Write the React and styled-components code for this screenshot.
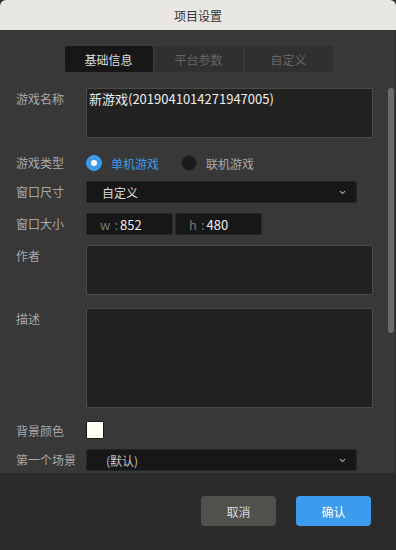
import React, { useState } from "react";
import styled, { createGlobalStyle } from "styled-components";

const GlobalStyle = createGlobalStyle`
  html, body {
    margin: 0;
    padding: 0;
    background: #2b2b2b;
  }
  * {
    box-sizing: border-box;
  }
  body {
    font-family: "Noto Sans CJK SC", "Noto Sans", sans-serif;
    font-size: 12px;
  }
`;

const Window = styled.div`
  width: 396px;
  height: 550px;
  display: flex;
  flex-direction: column;
  background: #2b2b2b;
  overflow: hidden;
`;

const TitleBar = styled.header`
  height: 30px;
  flex: none;
  display: flex;
  align-items: center;
  justify-content: center;
  background: #e8e7e3;
  border-radius: 6px 6px 0 0;
  color: #333;
  font-size: 12px;
`;

const Main = styled.div`
  height: 443px;
  flex: none;
  display: flex;
  flex-direction: column;
  background: #383838;
  box-shadow: inset -1px 0 0 #2e2e2e;
`;

const Tabs = styled.nav`
  display: flex;
  justify-content: center;
  gap: 2px;
  padding-top: 16px;
  padding-left: 1px;
`;

const Tab = styled.div`
  width: 88px;
  height: 26px;
  display: flex;
  align-items: center;
  justify-content: center;
  border-radius: 2px;
  background: ${(p) => (p.$active ? "#171717" : "#303030")};
  color: ${(p) => (p.$active ? "#dcdcdc" : "#666")};
  cursor: pointer;
`;

const ScrollArea = styled.div`
  position: relative;
  flex: 1;
  margin-top: 16px;
  overflow: hidden;
`;

const ScrollThumb = styled.div`
  position: absolute;
  top: 0;
  right: 2px;
  width: 6px;
  height: 245px;
  border-radius: 3px;
  background: #6b6b68;
`;

const Form = styled.div`
  display: flex;
  flex-direction: column;
  padding: 0 23px 0 16px;
`;

const Row = styled.div`
  display: grid;
  grid-template-columns: 70px 1fr;
  align-items: ${(p) => (p.$top ? "start" : "center")};
  margin-top: ${(p) => p.$gap || 0}px;
`;

const Label = styled.label`
  color: #a8a8a8;
  line-height: ${(p) => p.$lh || 22}px;
  white-space: nowrap;
  padding-top: ${(p) => p.$shift || 0}px;
`;

const TextArea = styled.textarea`
  display: block;
  width: 100%;
  height: ${(p) => p.$h}px;
  resize: none;
  background: #222221;
  border: 1px solid #4a4a4a;
  border-radius: 1px;
  color: #eee;
  font-family: inherit;
  font-size: 13px;
  line-height: 18px;
  padding: 1px 2px;
  outline: none;
`;

const Radios = styled.div`
  display: flex;
  align-items: center;
  gap: 22px;
  height: 22px;
`;

const RadioItem = styled.div`
  display: flex;
  align-items: center;
  gap: 9px;
  color: ${(p) => (p.$on ? "#3d9be9" : "#a8a8a8")};
  cursor: pointer;
`;

const Dot = styled.span`
  width: 16px;
  height: 16px;
  border-radius: 50%;
  display: flex;
  align-items: center;
  justify-content: center;
  background: ${(p) => (p.$on ? "#3d9be9" : "#1b1b1b")};
  border: 1px solid ${(p) => (p.$on ? "#3d9be9" : "#2e2e2e")};
  &::after {
    content: "";
    width: 6px;
    height: 6px;
    border-radius: 50%;
    background: ${(p) => (p.$on ? "#fff" : "transparent")};
  }
`;

const Select = styled.div`
  width: 271px;
  height: 22px;
  display: flex;
  align-items: center;
  justify-content: space-between;
  padding: 0 10px 0 ${(p) => p.$indent || 15}px;
  background: #171717;
  border: 1px solid #262626;
  border-radius: 2px;
  color: ${(p) => p.$color || "#dcdcdc"};
  font-size: 12px;
`;

const SizeInputs = styled.div`
  display: flex;
  gap: 2px;
`;

const SizeBox = styled.div`
  width: 87px;
  height: 22px;
  display: flex;
  align-items: center;
  padding-left: 13px;
  background: #171717;
  border: 1px solid #262626;
  border-radius: 2px;
  font-size: 13px;
  color: #eee;
  span {
    color: #777;
    margin-right: 4px;
  }
  b {
    color: #777;
    font-weight: normal;
    margin-right: 2px;
  }
`;

const Swatch = styled.div`
  width: 18px;
  height: 18px;
  background: ${(p) => p.$color};
  border: 1px solid #1a1a1a;
  border-radius: 1px;
`;

const Footer = styled.footer`
  flex: 1;
  display: flex;
  justify-content: flex-end;
  align-items: flex-start;
  gap: 20px;
  padding: 23px 25px 0 0;
  background: #2b2b2b;
`;

const Button = styled.button`
  width: 75px;
  height: 30px;
  border: none;
  border-radius: 4px;
  font-family: inherit;
  font-size: 12px;
  background: ${(p) => (p.$primary ? "#3d9bee" : "#50504d")};
  color: ${(p) => (p.$primary ? "#fff" : "#ddd")};
  cursor: pointer;
`;

const Chevron = () => (
  <svg width="7" height="5" viewBox="0 0 7 5">
    <path d="M1 1.2 L3.5 3.6 L6 1.2" fill="none" stroke="#b0b0b0" strokeWidth="1.1" />
  </svg>
);

const Radio = ({ on, label, onClick }) => (
  <RadioItem $on={on} onClick={onClick}>
    <Dot $on={on} />
    {label}
  </RadioItem>
);

export default function App() {
  const [tab, setTab] = useState(0);
  const [mode, setMode] = useState(0);
  const tabs = ["基础信息", "平台参数", "自定义"];

  return (
    <>
      <GlobalStyle />
      <Window>
        <TitleBar>项目设置</TitleBar>
        <Main>
          <Tabs>
            {tabs.map((t, i) => (
              <Tab key={t} $active={tab === i} onClick={() => setTab(i)}>
                {t}
              </Tab>
            ))}
          </Tabs>
          <ScrollArea>
            <Form>
              <Row $top>
                <Label>游戏名称</Label>
                <TextArea $h={50} defaultValue="新游戏(2019041014271947005)" />
              </Row>
              <Row $gap={14}>
                <Label>游戏类型</Label>
                <Radios>
                  <Radio on={mode === 0} label="单机游戏" onClick={() => setMode(0)} />
                  <Radio on={mode === 1} label="联机游戏" onClick={() => setMode(1)} />
                </Radios>
              </Row>
              <Row $gap={7}>
                <Label>窗口尺寸</Label>
                <Select>
                  自定义
                  <Chevron />
                </Select>
              </Row>
              <Row $gap={10}>
                <Label>窗口大小</Label>
                <SizeInputs>
                  <SizeBox>
                    <span>w</span>
                    <b>:</b>852
                  </SizeBox>
                  <SizeBox>
                    <span>h</span>
                    <b>:</b>480
                  </SizeBox>
                </SizeInputs>
              </Row>
              <Row $top $gap={10}>
                <Label>作者</Label>
                <TextArea $h={50} />
              </Row>
              <Row $top $gap={13}>
                <Label>描述</Label>
                <TextArea $h={100} />
              </Row>
              <Row $gap={13}>
                <Label $lh={16} $shift={2}>背景颜色</Label>
                <Swatch $color="#fffff8" />
              </Row>
              <Row $gap={10}>
                <Label>第一个场景</Label>
                <Select $indent={19} $color="#c4c4c4">
                  (默认)
                  <Chevron />
                </Select>
              </Row>
            </Form>
            <ScrollThumb />
          </ScrollArea>
        </Main>
        <Footer>
          <Button>取消</Button>
          <Button $primary>确认</Button>
        </Footer>
      </Window>
    </>
  );
}
